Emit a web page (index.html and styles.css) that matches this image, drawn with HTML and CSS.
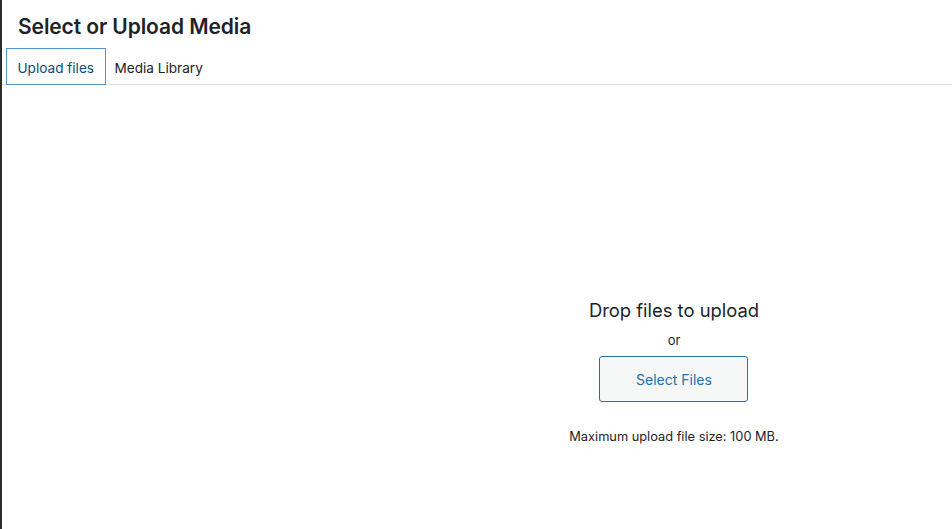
FILE: index.html
```html
<!DOCTYPE html>
<html>
<head>
<meta charset="utf-8">
<link rel="stylesheet" href="styles.css">
</head>
<body>
<div class="frame">
  <div class="modal">
    <h1 class="title">Select or Upload Media</h1>
    <div class="tabs">
      <span class="tab active">Upload files</span>
      <span class="tab">Media Library</span>
    </div>
    <div class="content">
      <div class="uploader">
        <p class="drop">Drop files to upload</p>
        <p class="or">or</p>
        <button class="select">Select Files</button>
        <p class="max">Maximum upload file size: 100 MB.</p>
      </div>
    </div>
  </div>
</div>
</body>
</html>
```
FILE: styles.css
```css
html, body {
  margin: 0;
  padding: 0;
  height: 100%;
  background: #fff;
}
body {
  font-family: Inter, "Liberation Sans", sans-serif;
  color: #1d2327;
}
.frame {
  height: 100%;
  border-left: 2px solid #2c2c2c;
  box-sizing: border-box;
}
.modal {
  display: flex;
  flex-direction: column;
  height: 100%;
}
.title {
  margin: 0;
  padding: 13px 0 0 16px;
  height: 35px;
  font-size: 21px;
  font-weight: 600;
  line-height: 28px;
  letter-spacing: -0.1px;
}
.tabs {
  display: flex;
  align-items: stretch;
  height: 36px;
  padding-left: 4px;
  border-bottom: 1px solid #dcdcde;
}
.tab {
  display: flex;
  align-items: center;
  padding: 3px 10px 0 9px;
  font-size: 13.6px;
  color: #1d2327;
}
.tab.active {
  color: #0a4b78;
  padding: 3px 10.5px 0;
  border: 1px solid #4f94d4;
  margin-bottom: -1px;
}
.content {
  flex: 1;
  display: flex;
  justify-content: center;
  padding-left: 394px;
}
.uploader {
  display: flex;
  flex-direction: column;
  align-items: center;
  padding-top: 213px;
}
.drop {
  margin: 0;
  font-size: 18.4px;
  line-height: 24px;
}
.or {
  margin: 10px 0 0;
  font-size: 13px;
  line-height: 16px;
}
.select {
  margin-top: 8px;
  width: 149px;
  height: 46px;
  border: 1px solid #2271b1;
  border-radius: 3px;
  background: #f6f7f7;
  color: #2271b1;
  font-family: inherit;
  font-size: 14px;
}
.max {
  margin: 27px 0 0;
  font-size: 12.8px;
  line-height: 16px;
}
```
